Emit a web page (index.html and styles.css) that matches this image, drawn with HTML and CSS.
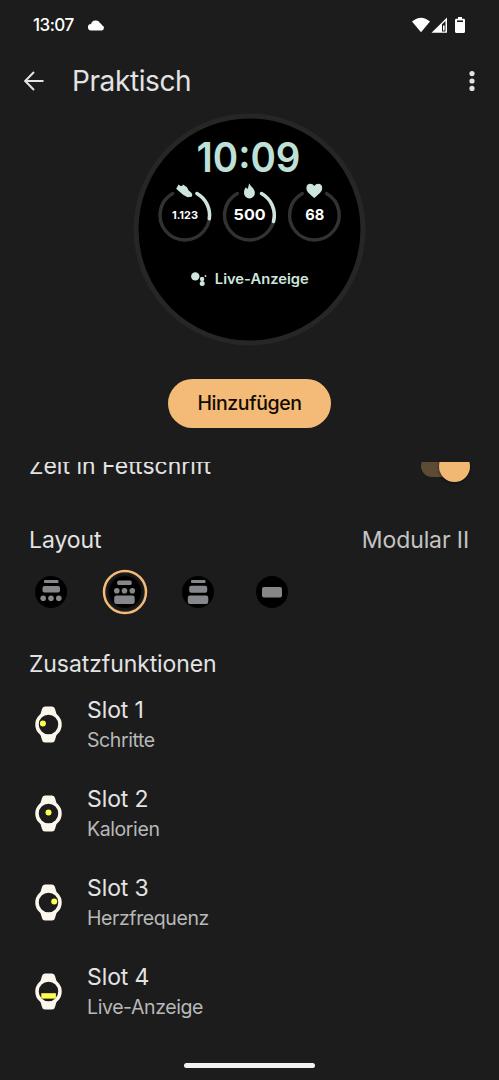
FILE: index.html
```
<!DOCTYPE html>
<html lang="de">
<head>
<meta charset="utf-8">
<meta name="viewport" content="width=device-width, initial-scale=1">
<title>Praktisch</title>
<link rel="stylesheet" href="styles.css">
</head>
<body>
<div class="screen">
  <header class="status">
    <span class="clock">13:07</span>
    <svg class="cloud" width="17" height="11" viewBox="0 0 17 11"><path d="M3.200 10.400a3.200 3.200 0 0 1-.2-6.400A5 5 0 0 1 12 2.900 3.900 3.900 0 0 1 14 5.200 2.700 2.700 0 0 1 14 10.400z"/></svg>
    <svg class="signals" width="54" height="17" viewBox="0 0 54 17"><path d="M0 4.600Q9 -3 18 4.600L9 15.200z"/><path d="M19.500 15.700 35 .5V15.700z"/><path class="hole" d="M30 7.200 33.500 4V14.500H30z"/><path d="M31 8.500h1.600v5H31z"/><path d="M46 0h4v1.700h1.700q1.300 0 1.300 1.300v11.500q0 1.500-1.500 1.500h-7q-1.500 0-1.500-1.500V3q0-1.300 1.300-1.300H46z"/><path class="hole" d="M45 3.400h6v1.600h-6z"/></svg>
  </header>
  <nav class="appbar">
    <svg class="back" width="20" height="20" viewBox="0 0 20 20"><path d="M19.500 10H1.500M10 1 1.200 10 10 19"/></svg>
    <h1 class="title">Praktisch</h1>
    <svg class="more" width="6" height="20" viewBox="0 0 6 20"><circle cx="3" cy="2.600" r="2.600"/><circle cx="3" cy="10" r="2.600"/><circle cx="3" cy="17.400" r="2.600"/></svg>
  </nav>
  <svg class="face" width="234" height="234" viewBox="133 113 234 234">
    <circle cx="249.500" cy="229.500" r="113.500" class="bezel"/>
    <text x="196.500" y="171.500" class="face-time" textLength="104" lengthAdjust="spacingAndGlyphs">10:09</text>
    <g class="ring">
      <path d="M172.700 193.500A24.800 24.800 0 1 0 196.900 193.500"/>
      <path d="M237.300 193.500A24.800 24.800 0 1 0 261.500 193.500"/>
      <path d="M302.300 193.500A24.800 24.800 0 1 0 326.500 193.500"/>
    </g>
    <g class="arc">
      <path d="M196.900 193.500A24.800 24.800 0 0 1 209.300 218.800"/>
      <path d="M261.500 193.500A24.800 24.800 0 0 1 273.500 221.500"/>
    </g>
    <g class="mint">
      <path d="M178.500 184.500 180.500 186Q182.500 186.500 183 184.600L187 187.300 188.500 190.300 191.600 193Q193.200 195 191.600 196.800L187.500 197.200 183 194.800 176.200 188.800z"/>
      <path d="M249.500 183.200C249.500 186 254.900 188 254.900 193A5.400 5.400 0 0 1 244 193C244 190 244.800 188.600 246 187.300L247.300 189C249 187.500 248 185.200 249.500 183.200z"/>
      <path d="M314.300 198C309 193.500 306.400 191.500 306.400 188C306.400 183.400 311.800 182.500 314.300 186C316.800 182.500 322.200 183.400 322.200 188C322.200 191.500 319.500 193.500 314.300 198z"/>
      <circle cx="195.300" cy="276.400" r="4.200"/><circle cx="202.100" cy="279" r="2.200"/><circle cx="202.200" cy="283.600" r="2.500"/><circle cx="205.500" cy="276" r=".9"/>
      <text x="214.800" y="283.900" class="live" textLength="94" lengthAdjust="spacingAndGlyphs">Live-Anzeige</text>
    </g>
    <text x="172" y="219" class="num small" textLength="26" lengthAdjust="spacingAndGlyphs">1.123</text>
    <text x="233.600" y="220" class="num" textLength="32" lengthAdjust="spacingAndGlyphs">500</text>
    <text x="305.200" y="220" class="num" textLength="19" lengthAdjust="spacingAndGlyphs">68</text>
  </svg>
  <button class="add">Hinzufügen</button>
  <main class="settings">
    <div class="toggle-row">
      <span class="heading bold-label">Zeit in Fettschrift</span>
      <span class="switch"><span class="thumb"></span></span>
    </div>
    <div class="layout-row">
      <h2 class="heading layout-label">Layout</h2>
      <span class="heading value">Modular II</span>
    </div>
    <div class="options">
      <svg width="46" height="46" viewBox="-23 -23 46 46"><circle r="16"/><g class="blocks"><rect x="-7" y="-12" width="14.500" height="3" rx="1"/><rect x="-8.500" y="-6" width="17.500" height="6.500" rx="2"/><circle cx="-7.800" cy="6.300" r="2.800"/><circle cx="0" cy="6.300" r="2.800"/><circle cx="7.800" cy="6.300" r="2.800"/></g></svg>
      <svg width="46" height="46" viewBox="-23 -23 46 46"><circle r="18" fill="#141414"/><circle r="16"/><circle r="21" class="selected"/><g class="blocks"><rect x="-7.800" y="-11.500" width="14.500" height="4.500" rx="1.500"/><circle cx="-8.200" cy="-1.200" r="2.800"/><circle cx="-.5" cy="-1.200" r="2.800"/><circle cx="7.300" cy="-1.200" r="2.800"/><rect x="-10.800" y="3.500" width="20.500" height="8.500" rx="2.200"/></g></svg>
      <svg width="46" height="46" viewBox="-23 -23 46 46"><circle r="16"/><g class="blocks"><rect x="-7" y="-12" width="14.500" height="3" rx="1"/><rect x="-8.800" y="-6.200" width="18" height="7" rx="2"/><rect x="-10.200" y="3.500" width="20.500" height="8.500" rx="2.200"/></g></svg>
      <svg width="46" height="46" viewBox="-23 -23 46 46"><circle r="16"/><g class="blocks"><rect x="-10" y="-5" width="20" height="10.500" rx="2"/></g></svg>
    </div>
    <h2 class="heading extras">Zusatzfunktionen</h2>
    <ul class="slots">
      <li class="slot">
        <svg width="27" height="37" viewBox="0 0 27 37"><path class="strap" d="M5.500 8 7 3Q7.500.5 10 .5h7Q19.500.5 20 3l1.500 5V29L20 34Q19.500 36.500 17 36.500H10Q7.500 36.500 7 34L5.500 29z"/><circle class="case" cx="13.500" cy="18.500" r="11.500"/><circle class="dot" cx="7.900" cy="17.400" r="3"/></svg>
        <div><div class="heading name">Slot 1</div><div class="sub">Schritte</div></div>
      </li>
      <li class="slot">
        <svg width="27" height="37" viewBox="0 0 27 37"><path class="strap" d="M5.500 8 7 3Q7.500.5 10 .5h7Q19.500.5 20 3l1.500 5V29L20 34Q19.500 36.500 17 36.500H10Q7.500 36.500 7 34L5.500 29z"/><circle class="case" cx="13.500" cy="18.500" r="11.500"/><circle class="dot" cx="13.500" cy="17.400" r="3"/></svg>
        <div><div class="heading name">Slot 2</div><div class="sub">Kalorien</div></div>
      </li>
      <li class="slot">
        <svg width="27" height="37" viewBox="0 0 27 37"><path class="strap" d="M5.500 8 7 3Q7.500.5 10 .5h7Q19.500.5 20 3l1.500 5V29L20 34Q19.500 36.500 17 36.500H10Q7.500 36.500 7 34L5.500 29z"/><circle class="case" cx="13.500" cy="18.500" r="11.500"/><circle class="dot" cx="19.200" cy="17.400" r="3"/></svg>
        <div><div class="heading name">Slot 3</div><div class="sub">Herzfrequenz</div></div>
      </li>
      <li class="slot">
        <svg width="27" height="37" viewBox="0 0 27 37"><path class="strap" d="M5.500 8 7 3Q7.500.5 10 .5h7Q19.500.5 20 3l1.500 5V29L20 34Q19.500 36.500 17 36.500H10Q7.500 36.500 7 34L5.500 29z"/><circle class="case" cx="13.500" cy="18.500" r="11.500"/><rect class="dot" x="6.300" y="20.200" width="14.600" height="5.400"/></svg>
        <div><div class="heading name">Slot 4</div><div class="sub">Live-Anzeige</div></div>
      </li>
    </ul>
  </main>
  <div class="home"></div>
</div>
</body>
</html>
```

FILE: styles.css
```
* { box-sizing: border-box; margin: 0; padding: 0; }
body { background: #1c1c1c; color: #e3e3e3; font-family: Inter, "Liberation Sans", sans-serif; }
svg { display: block; flex: none; }
.screen { width: 499px; height: 1080px; overflow: hidden; display: flex; flex-direction: column; align-items: center; }
.status { width: 100%; height: 50px; padding-left: 33px; display: flex; align-items: center; color: #fff; flex: none; }
.clock { width: 55px; font-size: 17px; font-weight: 500; letter-spacing: -0.5px; white-space: nowrap; }
.cloud, .signals { fill: #fff; }
.signals { margin-left: auto; margin-right: 33px; }
.signals .hole { fill: #1c1c1c; }
.appbar { width: 100%; height: 62px; padding: 0 24px; display: flex; align-items: center; flex: none; }
.back { fill: none; stroke: #e3e3e3; stroke-width: 2; }
.title { margin-left: 28px; font-size: 28px; font-weight: 400; line-height: 34px; letter-spacing: -0.4px; }
.more { margin-left: auto; fill: #e3e3e3; }
.face { margin-top: 1px; }
.bezel { fill: #000; stroke: #272624; stroke-width: 5; }
.face-time { font-size: 40.500px; font-weight: 600; fill: #bee0d6; }
.ring, .arc { fill: none; stroke-width: 3.500; stroke: #323232; stroke-linecap: round; }
.arc { stroke: #cde5de; }
.mint { fill: #cde5de; }
.live { font-size: 14px; font-weight: 600; }
.num { font-size: 15px; font-weight: 700; fill: #fff; }
.small { font-size: 11px; }
.add { margin-top: 32px; width: 163px; height: 49px; border: 0; border-radius: 25px; background: #f4bb78; color: #120b00; font: 500 19.500px/49px Inter, sans-serif; letter-spacing: -0.4px; flex: none; }
.settings { width: 100%; height: 590px; margin-top: 34px; padding: 0 30px 0 29px; overflow: hidden; flex: none; }
.heading { font-size: 23px; font-weight: 400; line-height: 28px; letter-spacing: -0.1px; white-space: nowrap; }
.toggle-row { display: flex; justify-content: space-between; align-items: center; height: 32px; margin: -12px -1px 0 0; }
.bold-label { letter-spacing: 0; }
.switch { width: 49px; height: 22px; display: flex; align-items: center; justify-content: flex-end; border-radius: 11px; background: #5d4b35; }
.thumb { width: 31px; height: 31px; border-radius: 50%; background: #f1b874; box-shadow: 0 1px 3px #0008; flex: none; }
.layout-row { display: flex; justify-content: space-between; margin-top: 44px; }
.value { color: #c4c4c4; }
.options { display: flex; gap: 27.500px; margin: 15px 0 0 -1px; }
.blocks { fill: #85878a; }
.selected { fill: none; stroke: #f4bb78; stroke-width: 2.500; }
.extras { margin-top: 35px; }
.slots { list-style: none; margin-top: 14px; }
.slot { height: 89.100px; padding-left: 6px; display: flex; gap: 25px; align-items: flex-start; }
.slot svg { margin-top: 14px; }
.name { line-height: 30px; margin-top: 3px; }
.sub { margin-top: 1px; font-size: 19.500px; font-weight: 400; color: #b8b8b8; line-height: 28px; letter-spacing: -0.4px; white-space: nowrap; }
.strap { fill: #fbf7ec; }
.case { fill: #1c1c1c; stroke: #fbf7ec; stroke-width: 3.500; }
.dot { fill: #ffff4d; }
.home { width: 131px; height: 5px; margin-top: 11px; border-radius: 3px; background: #f2f2f2; flex: none; }
```
